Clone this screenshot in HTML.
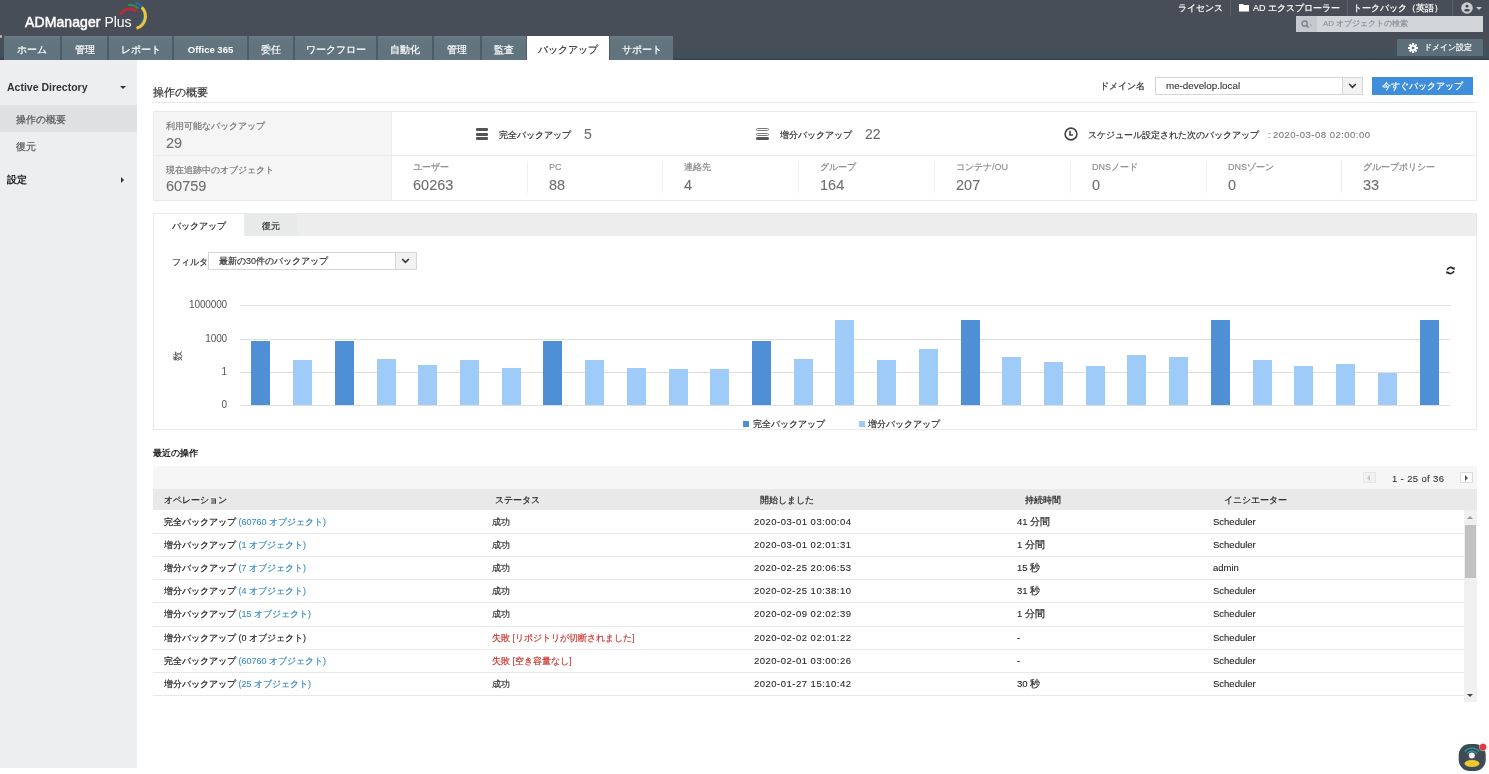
<!DOCTYPE html>
<html lang="ja"><head><meta charset="utf-8"><title>ADManager Plus</title>
<style>
html,body{margin:0;padding:0;width:1489px;height:774px;overflow:hidden;background:#fff;font-family:"Liberation Sans",sans-serif}
.t{will-change:transform}
.b{position:absolute}
.t{position:absolute;white-space:nowrap}
.s{-webkit-text-stroke:0.2px currentColor}
.s0{-webkit-text-stroke:0.1px currentColor}
</style></head><body>
<div class="b" style="left:0px;top:0px;width:1489px;height:60px;background:linear-gradient(to bottom,#474e57 0px,#474e57 46px,#3f5059 54px,#3d4f59 58px,#394249 59px)"></div>
<div class="t" style="left:25px;top:12px;font-size:14px;line-height:20px;color:#fff"><span style="-webkit-text-stroke:0.5px #fff;letter-spacing:0.1px">ADManager</span> <span style="letter-spacing:-0.1px">Plus</span></div>
<svg class="b" style="left:110px;top:0px" width="40" height="35" viewBox="0 0 40 35">
<path d="M10.4 14.6 A11 11 0 0 1 26.5 11.2" stroke="#b82a40" stroke-width="3" fill="none"/>
<path d="M18 5 A14 14 0 0 1 28.5 8.5" stroke="#2f8a50" stroke-width="2.2" fill="none"/>
<path d="M25.5 2.5 A13 13 0 0 1 30 24.5" stroke="#1f6ea5" stroke-width="2.2" fill="none"/>
<path d="M31.8 7.4 A12.5 12.5 0 0 1 26.5 28.2" stroke="#f0c53a" stroke-width="3" fill="none"/>
</svg>
<div class="t s0" style="left:1178px;top:2.0px;font-size:9px;line-height:12px;color:#fff;"><span class="s">ライセンス</span></div>
<div class="b" style="left:1230px;top:0px;width:1px;height:16px;background:#5a6168"></div>
<svg class="b" style="left:1239px;top:3px" width="10" height="9" viewBox="0 0 10 9"><path d="M0 1 H4 L5 2 H10 V8.5 H0 Z" fill="#fff"/></svg>
<div class="t s0" style="left:1253px;top:2.0px;font-size:9px;line-height:12px;color:#fff;">AD <span class="s">エクスプローラー</span></div>
<div class="b" style="left:1347px;top:0px;width:1px;height:16px;background:#5a6168"></div>
<div class="t s0" style="left:1353px;top:2.0px;font-size:9px;line-height:12px;color:#fff;"><span class="s">トークバック（英語）</span></div>
<div class="b" style="left:1452px;top:0px;width:1px;height:16px;background:#5a6168"></div>
<svg class="b" style="left:1461px;top:2px" width="12" height="12" viewBox="0 0 12 12"><circle cx="6" cy="6" r="5.8" fill="#c8cdd3"/><circle cx="6" cy="4.2" r="1.4" fill="#3e454c"/><ellipse cx="6" cy="8.2" rx="2.8" ry="1.3" fill="#3e454c"/></svg>
<div class="b" style="left:1476px;top:7px;border-left:3px solid transparent;border-right:3px solid transparent;border-top:3px solid #c8cdd3"></div>
<div class="b" style="left:1296px;top:16px;width:187px;height:16px;background:#d2d6d9"></div>
<div class="b" style="left:1296px;top:16px;width:21px;height:16px;background:#c4c9cc"></div>
<svg class="b" style="left:1301px;top:20px" width="12" height="9" viewBox="0 0 12 9"><circle cx="3.6" cy="3.6" r="2.6" stroke="#7b8288" stroke-width="1.4" fill="none"/><path d="M5.5 5.5 L7.6 7.8" stroke="#7b8288" stroke-width="1.6"/><path d="M9.5 4.5 L10.5 5.5" stroke="#7b8288" stroke-width="1"/></svg>
<div class="t s0" style="left:1323px;top:18.0px;font-size:8px;line-height:12px;color:#8b9196;">AD <span class="s">オブジェクトの検索</span></div>
<div class="b" style="left:1397px;top:39px;width:86px;height:17px;background:#5c6e7a"></div>
<svg class="b" style="left:1408px;top:43px" width="10" height="10" viewBox="0 0 10 10"><g fill="#fff"><circle cx="5" cy="5" r="3.3"/><rect x="4" y="0" width="2" height="10"/><rect x="0" y="4" width="10" height="2"/><rect x="4" y="0" width="2" height="10" transform="rotate(45 5 5)"/><rect x="4" y="0" width="2" height="10" transform="rotate(-45 5 5)"/></g><circle cx="5" cy="5" r="1.3" fill="#5c6e7a"/></svg>
<div class="t s0" style="left:1424px;top:41.5px;font-size:8px;line-height:12px;color:#fff;"><span class="s">ドメイン設定</span></div>
<div class="b" style="left:4px;top:36px;width:669px;height:24px;background:#4b5d68"></div>
<div class="b" style="left:0px;top:34.5px;width:2px;height:3.0px;background:#b8bec2;border-radius:1px"></div>
<div class="b" style="left:4px;top:36px;width:56px;height:24px;background:linear-gradient(to bottom,#6a7c86 0px,#63767f 3px,#60737e 20px,#63757f 24px)"></div>
<div class="t s" style="left:4px;top:42.5px;width:56px;text-align:center;color:#fff;font-size:9.5px;line-height:14px;">ホーム</div>
<div class="b" style="left:62px;top:36px;width:45px;height:24px;background:linear-gradient(to bottom,#6a7c86 0px,#63767f 3px,#60737e 20px,#63757f 24px)"></div>
<div class="t s" style="left:62px;top:42.5px;width:45px;text-align:center;color:#fff;font-size:9.5px;line-height:14px;">管理</div>
<div class="b" style="left:109px;top:36px;width:63px;height:24px;background:linear-gradient(to bottom,#6a7c86 0px,#63767f 3px,#60737e 20px,#63757f 24px)"></div>
<div class="t s" style="left:109px;top:42.5px;width:63px;text-align:center;color:#fff;font-size:9.5px;line-height:14px;">レポート</div>
<div class="b" style="left:174px;top:36px;width:73px;height:24px;background:linear-gradient(to bottom,#6a7c86 0px,#63767f 3px,#60737e 20px,#63757f 24px)"></div>
<div class="t " style="left:174px;top:42.5px;width:73px;text-align:center;color:#fff;font-size:9.5px;line-height:14px;font-weight:bold;">Office 365</div>
<div class="b" style="left:249px;top:36px;width:44px;height:24px;background:linear-gradient(to bottom,#6a7c86 0px,#63767f 3px,#60737e 20px,#63757f 24px)"></div>
<div class="t s" style="left:249px;top:42.5px;width:44px;text-align:center;color:#fff;font-size:9.5px;line-height:14px;">委任</div>
<div class="b" style="left:295px;top:36px;width:81px;height:24px;background:linear-gradient(to bottom,#6a7c86 0px,#63767f 3px,#60737e 20px,#63757f 24px)"></div>
<div class="t s" style="left:295px;top:42.5px;width:81px;text-align:center;color:#fff;font-size:9.5px;line-height:14px;">ワークフロー</div>
<div class="b" style="left:378px;top:36px;width:54px;height:24px;background:linear-gradient(to bottom,#6a7c86 0px,#63767f 3px,#60737e 20px,#63757f 24px)"></div>
<div class="t s" style="left:378px;top:42.5px;width:54px;text-align:center;color:#fff;font-size:9.5px;line-height:14px;">自動化</div>
<div class="b" style="left:434px;top:36px;width:46px;height:24px;background:linear-gradient(to bottom,#6a7c86 0px,#63767f 3px,#60737e 20px,#63757f 24px)"></div>
<div class="t s" style="left:434px;top:42.5px;width:46px;text-align:center;color:#fff;font-size:9.5px;line-height:14px;">管理</div>
<div class="b" style="left:482px;top:36px;width:44px;height:24px;background:linear-gradient(to bottom,#6a7c86 0px,#63767f 3px,#60737e 20px,#63757f 24px)"></div>
<div class="t s" style="left:482px;top:42.5px;width:44px;text-align:center;color:#fff;font-size:9.5px;line-height:14px;">監査</div>
<div class="b" style="left:527px;top:36px;width:82px;height:24px;background:#ffffff"></div>
<div class="t s" style="left:527px;top:42.5px;width:82px;text-align:center;color:#333;font-size:9.5px;line-height:14px;">バックアップ</div>
<div class="b" style="left:610px;top:36px;width:63px;height:24px;background:linear-gradient(to bottom,#6a7c86 0px,#63767f 3px,#60737e 20px,#63757f 24px)"></div>
<div class="t s" style="left:610px;top:42.5px;width:63px;text-align:center;color:#fff;font-size:9.5px;line-height:14px;">サポート</div>
<div class="b" style="left:0px;top:60px;width:137px;height:708px;background:#edeeef"></div>
<div class="b" style="left:0px;top:105px;width:137px;height:27px;background:#dfe0e1"></div>
<div class="t" style="left:7px;top:80.0px;font-size:10.5px;line-height:14px;color:#333;font-weight:bold;">Active Directory</div>
<div class="b" style="left:120px;top:85.5px;border-left:3px solid transparent;border-right:3px solid transparent;border-top:3px solid #333"></div>
<div class="t s0" style="left:16px;top:112.5px;font-size:9.5px;line-height:14px;color:#555;"><span class="s">操作の概要</span></div>
<div class="t s0" style="left:16px;top:140.0px;font-size:9.5px;line-height:14px;color:#555;"><span class="s">復元</span></div>
<div class="t" style="left:7px;top:173.0px;font-size:10px;line-height:14px;color:#222;font-weight:bold;">設定</div>
<div class="b" style="left:121px;top:177px;border-top:3px solid transparent;border-bottom:3px solid transparent;border-left:3px solid #333"></div>
<div class="t s0" style="left:153px;top:84.5px;font-size:10.5px;line-height:14px;color:#333;"><span class="s">操作の概要</span></div>
<div class="t s0" style="left:1100px;top:79.0px;font-size:9px;line-height:14px;color:#333;"><span class="s">ドメイン名</span></div>
<div class="b" style="left:1155px;top:77px;width:208px;height:18px;background:#fff;border:1px solid #d6d6d6;box-sizing:border-box"></div>
<div class="b" style="left:1342px;top:77px;width:21px;height:18px;background:#f2f2f2;border:1px solid #d6d6d6;box-sizing:border-box"></div>
<div class="t s0" style="left:1166px;top:79.0px;font-size:9.8px;line-height:14px;color:#333;">me-develop.local</div>
<svg class="b" style="left:1348px;top:82px" width="9" height="8" viewBox="0 0 9 8"><path d="M1.2 2 L4.5 5.3 L7.8 2" stroke="#333" stroke-width="1.6" fill="none"/></svg>
<div class="b" style="left:1372px;top:77px;width:101px;height:18px;background:#3f8edc"></div>
<div class="t s" style="left:1372px;top:79px;width:101px;line-height:14px;text-align:center;color:#fff;font-size:9px">今すぐバックアップ</div>
<div class="b" style="left:152px;top:102px;width:1325px;height:1px;background:#e8e8e8"></div>
<div class="b" style="left:153px;top:111px;width:1324px;height:90px;border:1px solid #e9e9e9;box-sizing:border-box;background:#fff"></div>
<div class="b" style="left:154px;top:112px;width:237px;height:88px;background:#f5f5f5"></div>
<div class="b" style="left:391px;top:112px;width:1px;height:88px;background:#ebebeb"></div>
<div class="b" style="left:154px;top:155px;width:1322px;height:1px;background:#ebebeb"></div>
<div class="t s0" style="left:166px;top:119.5px;font-size:9px;line-height:12px;color:#777;"><span class="s">利用可能なバックアップ</span></div>
<div class="t s0" style="left:166px;top:133.5px;font-size:14.5px;line-height:18px;color:#6e6e6e;">29</div>
<div class="t s0" style="left:166px;top:163.5px;font-size:9px;line-height:12px;color:#777;"><span class="s">現在追跡中のオブジェクト</span></div>
<div class="t s0" style="left:166px;top:176.5px;font-size:14.5px;line-height:18px;color:#6e6e6e;">60759</div>
<div class="b" style="left:476px;top:128px;width:12px;height:3px;border-radius:1px;background:#555"></div>
<div class="b" style="left:476px;top:132.8px;width:12px;height:3px;border-radius:1px;background:#555"></div>
<div class="b" style="left:476px;top:137.4px;width:12px;height:3px;border-radius:1px;background:#555"></div>
<div class="t s0" style="left:499px;top:128.5px;font-size:9px;line-height:12px;color:#333;"><span class="s">完全バックアップ</span></div>
<div class="t s0" style="left:584px;top:125.0px;font-size:14px;line-height:18px;color:#6e6e6e;">5</div>
<div class="b" style="left:756px;top:128px;width:13px;height:3px;border-radius:2px;border:1px solid #777;box-sizing:border-box"></div>
<div class="b" style="left:756px;top:132.8px;width:13px;height:3px;border-radius:2px;border:1px solid #777;box-sizing:border-box"></div>
<div class="b" style="left:756px;top:137.4px;width:13px;height:3px;border-radius:2px;background:#555"></div>
<div class="t s0" style="left:780px;top:128.5px;font-size:9px;line-height:12px;color:#333;"><span class="s">増分バックアップ</span></div>
<div class="t s0" style="left:865px;top:125.0px;font-size:14px;line-height:18px;color:#6e6e6e;">22</div>
<svg class="b" style="left:1064px;top:127px" width="14" height="14" viewBox="0 0 14 14"><circle cx="7" cy="7" r="5.9" stroke="#444" stroke-width="1.6" fill="none"/><path d="M6 3.8 V8 H9" stroke="#444" stroke-width="1.6" fill="none"/></svg>
<div class="t s0" style="left:1088px;top:128.5px;font-size:9px;line-height:12px;color:#333;"><span class="s">スケジュール設定された次のバックアップ</span></div>
<div class="t s0" style="left:1268px;top:127.5px;font-size:9px;line-height:14px;color:#777;">: <span style="font-size:9.5px;letter-spacing:0.49px;-webkit-text-stroke:0.1px #777">2020-03-08 02:00:00</span></div>
<div class="t s0" style="left:413px;top:161.0px;font-size:9px;line-height:12px;color:#888;"><span class="s">ユーザー</span></div>
<div class="t s0" style="left:413px;top:175.5px;font-size:14.5px;line-height:18px;color:#6e6e6e;">60263</div>
<div class="b" style="left:527px;top:161px;width:1px;height:32px;background:#efefef"></div>
<div class="t s0" style="left:549px;top:161.0px;font-size:9px;line-height:12px;color:#888;">PC</div>
<div class="t s0" style="left:549px;top:175.5px;font-size:14.5px;line-height:18px;color:#6e6e6e;">88</div>
<div class="b" style="left:662px;top:161px;width:1px;height:32px;background:#efefef"></div>
<div class="t s0" style="left:684px;top:161.0px;font-size:9px;line-height:12px;color:#888;"><span class="s">連絡先</span></div>
<div class="t s0" style="left:684px;top:175.5px;font-size:14.5px;line-height:18px;color:#6e6e6e;">4</div>
<div class="b" style="left:798px;top:161px;width:1px;height:32px;background:#efefef"></div>
<div class="t s0" style="left:820px;top:161.0px;font-size:9px;line-height:12px;color:#888;"><span class="s">グループ</span></div>
<div class="t s0" style="left:820px;top:175.5px;font-size:14.5px;line-height:18px;color:#6e6e6e;">164</div>
<div class="b" style="left:934px;top:161px;width:1px;height:32px;background:#efefef"></div>
<div class="t s0" style="left:956px;top:161.0px;font-size:9px;line-height:12px;color:#888;"><span class="s">コンテナ</span>/OU</div>
<div class="t s0" style="left:956px;top:175.5px;font-size:14.5px;line-height:18px;color:#6e6e6e;">207</div>
<div class="b" style="left:1070px;top:161px;width:1px;height:32px;background:#efefef"></div>
<div class="t s0" style="left:1092px;top:161.0px;font-size:9px;line-height:12px;color:#888;">DNS<span class="s">ノード</span></div>
<div class="t s0" style="left:1092px;top:175.5px;font-size:14.5px;line-height:18px;color:#6e6e6e;">0</div>
<div class="b" style="left:1206px;top:161px;width:1px;height:32px;background:#efefef"></div>
<div class="t s0" style="left:1228px;top:161.0px;font-size:9px;line-height:12px;color:#888;">DNS<span class="s">ゾーン</span></div>
<div class="t s0" style="left:1228px;top:175.5px;font-size:14.5px;line-height:18px;color:#6e6e6e;">0</div>
<div class="b" style="left:1341px;top:161px;width:1px;height:32px;background:#efefef"></div>
<div class="t s0" style="left:1363px;top:161.0px;font-size:9px;line-height:12px;color:#888;"><span class="s">グループポリシー</span></div>
<div class="t s0" style="left:1363px;top:175.5px;font-size:14.5px;line-height:18px;color:#6e6e6e;">33</div>
<div class="b" style="left:153px;top:213px;width:1324px;height:217px;border:1px solid #e9e9e9;box-sizing:border-box;background:#fff"></div>
<div class="b" style="left:154px;top:214px;width:1322px;height:22px;background:#ededed"></div>
<div class="b" style="left:245px;top:214px;width:52px;height:22px;background:#e8e9e9"></div>
<div class="b" style="left:154px;top:214px;width:90px;height:23px;background:#fff"></div>
<div class="t s0" style="left:172px;top:220.0px;font-size:9px;line-height:12px;color:#333;"><span class="s">バックアップ</span></div>
<div class="t s0" style="left:262px;top:220.0px;font-size:9px;line-height:12px;color:#333;"><span class="s">復元</span></div>
<div class="t s0" style="left:172px;top:255.5px;font-size:9px;line-height:12px;color:#333;"><span class="s">フィルタ</span></div>
<div class="b" style="left:208px;top:252px;width:209px;height:18px;background:#fff;border:1px solid #d6d6d6;box-sizing:border-box"></div>
<div class="b" style="left:395px;top:252px;width:22px;height:18px;background:#f2f2f2;border:1px solid #d6d6d6;box-sizing:border-box"></div>
<div class="t s0" style="left:219px;top:255.0px;font-size:9px;line-height:12px;color:#333;"><span class="s">最新の</span>30<span class="s">件のバックアップ</span></div>
<svg class="b" style="left:401px;top:257px" width="9" height="8" viewBox="0 0 9 8"><path d="M1.2 2 L4.5 5.3 L7.8 2" stroke="#333" stroke-width="1.6" fill="none"/></svg>
<svg class="b" style="left:1445px;top:265px" width="11" height="11" viewBox="0 0 11 11"><path d="M2.2 5 A3.4 3.4 0 0 1 8.4 4" stroke="#222" stroke-width="1.5" fill="none"/><path d="M8.8 6 A3.4 3.4 0 0 1 2.6 7" stroke="#222" stroke-width="1.5" fill="none"/><path d="M6.8 3.6 L9.6 5 L9.6 2" fill="#222"/><path d="M4.2 7.4 L1.4 6 L1.4 9" fill="#222"/></svg>
<div class="b" style="left:240px;top:305px;width:1210px;height:1px;background:#dedede"></div>
<div class="t" style="left:150px;width:77px;text-align:right;top:298px;font-size:10px;line-height:14px;color:#555;letter-spacing:-0.15px">1000000</div>
<div class="b" style="left:240px;top:339px;width:1210px;height:1px;background:#dedede"></div>
<div class="t" style="left:150px;width:77px;text-align:right;top:332px;font-size:10px;line-height:14px;color:#555;letter-spacing:-0.15px">1000</div>
<div class="b" style="left:240px;top:372px;width:1210px;height:1px;background:#dedede"></div>
<div class="t" style="left:150px;width:77px;text-align:right;top:365px;font-size:10px;line-height:14px;color:#555;letter-spacing:-0.15px">1</div>
<div class="b" style="left:240px;top:405px;width:1210px;height:1px;background:#dedede"></div>
<div class="t" style="left:150px;width:77px;text-align:right;top:398px;font-size:10px;line-height:14px;color:#555;letter-spacing:-0.15px">0</div>
<div class="t" style="left:173px;top:349.5px;font-size:9.5px;line-height:12px;color:#444;transform:rotate(-90deg)">数</div>
<div class="b" style="left:251.3px;top:341px;width:19px;height:64px;background:#4f8fd5"></div>
<div class="b" style="left:293.0px;top:360px;width:19px;height:45px;background:#9fcbf9"></div>
<div class="b" style="left:334.7px;top:341px;width:19px;height:64px;background:#4f8fd5"></div>
<div class="b" style="left:376.5px;top:359px;width:19px;height:46px;background:#9fcbf9"></div>
<div class="b" style="left:418.2px;top:365px;width:19px;height:40px;background:#9fcbf9"></div>
<div class="b" style="left:459.9px;top:360px;width:19px;height:45px;background:#9fcbf9"></div>
<div class="b" style="left:501.6px;top:368px;width:19px;height:37px;background:#9fcbf9"></div>
<div class="b" style="left:543.3px;top:341px;width:19px;height:64px;background:#4f8fd5"></div>
<div class="b" style="left:585.1px;top:360px;width:19px;height:45px;background:#9fcbf9"></div>
<div class="b" style="left:626.8px;top:368px;width:19px;height:37px;background:#9fcbf9"></div>
<div class="b" style="left:668.5px;top:369px;width:19px;height:36px;background:#9fcbf9"></div>
<div class="b" style="left:710.2px;top:369px;width:19px;height:36px;background:#9fcbf9"></div>
<div class="b" style="left:751.9px;top:341px;width:19px;height:64px;background:#4f8fd5"></div>
<div class="b" style="left:793.7px;top:359px;width:19px;height:46px;background:#9fcbf9"></div>
<div class="b" style="left:835.4px;top:320px;width:19px;height:85px;background:#9fcbf9"></div>
<div class="b" style="left:877.1px;top:360px;width:19px;height:45px;background:#9fcbf9"></div>
<div class="b" style="left:918.8px;top:349px;width:19px;height:56px;background:#9fcbf9"></div>
<div class="b" style="left:960.5px;top:320px;width:19px;height:85px;background:#4f8fd5"></div>
<div class="b" style="left:1002.3px;top:357px;width:19px;height:48px;background:#9fcbf9"></div>
<div class="b" style="left:1044.0px;top:362px;width:19px;height:43px;background:#9fcbf9"></div>
<div class="b" style="left:1085.7px;top:366px;width:19px;height:39px;background:#9fcbf9"></div>
<div class="b" style="left:1127.4px;top:355px;width:19px;height:50px;background:#9fcbf9"></div>
<div class="b" style="left:1169.1px;top:357px;width:19px;height:48px;background:#9fcbf9"></div>
<div class="b" style="left:1210.9px;top:320px;width:19px;height:85px;background:#4f8fd5"></div>
<div class="b" style="left:1252.6px;top:360px;width:19px;height:45px;background:#9fcbf9"></div>
<div class="b" style="left:1294.3px;top:366px;width:19px;height:39px;background:#9fcbf9"></div>
<div class="b" style="left:1336.0px;top:364px;width:19px;height:41px;background:#9fcbf9"></div>
<div class="b" style="left:1377.7px;top:373px;width:19px;height:32px;background:#9fcbf9"></div>
<div class="b" style="left:1419.5px;top:320px;width:19px;height:85px;background:#4f8fd5"></div>
<div class="b" style="left:743px;top:421px;width:6px;height:6px;background:#4f8fd5"></div>
<div class="t s0" style="left:753px;top:418.0px;font-size:9px;line-height:12px;color:#333;"><span class="s">完全バックアップ</span></div>
<div class="b" style="left:859px;top:421px;width:6px;height:6px;background:#9fcbf9"></div>
<div class="t s0" style="left:868px;top:418.0px;font-size:9px;line-height:12px;color:#333;"><span class="s">増分バックアップ</span></div>
<div class="t" style="left:153px;top:447.0px;font-size:9px;line-height:12px;color:#222;font-weight:bold;">最近の操作</div>
<div class="b" style="left:153px;top:466px;width:1324px;height:23px;background:#f6f6f6"></div>
<div class="b" style="left:1363px;top:472px;width:13px;height:11px;background:#f1f1f1;border:1px solid #e6e6e6;box-sizing:border-box"></div>
<div class="b" style="left:1367px;top:474.5px;border-top:3px solid transparent;border-bottom:3px solid transparent;border-right:3px solid #c4c4c4"></div>
<div class="t s0" style="left:1392px;top:471.5px;font-size:9.5px;line-height:14px;color:#333;letter-spacing:0.35px">1 - 25 of 36</div>
<div class="b" style="left:1460px;top:472px;width:13px;height:11px;background:#fff;border:1px solid #dcdcdc;box-sizing:border-box"></div>
<div class="b" style="left:1465px;top:474.5px;border-top:3px solid transparent;border-bottom:3px solid transparent;border-left:3px solid #555"></div>
<div class="b" style="left:153px;top:489px;width:1324px;height:21px;background:#e9e9e9"></div>
<div class="t s0" style="left:164px;top:494.0px;font-size:9px;line-height:12px;color:#222;"><span class="s">オペレーション</span></div>
<div class="t s0" style="left:495px;top:494.0px;font-size:9px;line-height:12px;color:#222;"><span class="s">ステータス</span></div>
<div class="t s0" style="left:760px;top:494.0px;font-size:9px;line-height:12px;color:#222;"><span class="s">開始しました</span></div>
<div class="t s0" style="left:1025px;top:494.0px;font-size:9px;line-height:12px;color:#222;"><span class="s">持続時間</span></div>
<div class="t s0" style="left:1224px;top:494.0px;font-size:9px;line-height:12px;color:#222;"><span class="s">イニシエーター</span></div>
<div class="b" style="left:153px;top:533px;width:1311px;height:1px;background:#e8e8e8"></div>
<div class="t s0" style="left:164px;top:515.7px;font-size:9px;line-height:12px;color:#222;"><span class="s">完全バックアップ</span> <span style="color:#3b8cc0">(60760 <span class="s">オブジェクト</span>)</span></div>
<div class="t s0" style="left:492px;top:515.7px;font-size:9px;line-height:12px;color:#333;"><span class="s">成功</span></div>
<div class="t s0" style="left:754px;top:515.7px;font-size:9.5px;line-height:12px;color:#222;letter-spacing:0.49px;-webkit-text-stroke:0.1px #333">2020-03-01 03:00:04</div>
<div class="t s0" style="left:1017px;top:515.7px;font-size:9.5px;line-height:12px;color:#222;">41 <span class="s">分間</span></div>
<div class="t s0" style="left:1213px;top:515.7px;font-size:9.5px;line-height:12px;color:#222;">Scheduler</div>
<div class="b" style="left:153px;top:556px;width:1311px;height:1px;background:#e8e8e8"></div>
<div class="t s0" style="left:164px;top:538.9px;font-size:9px;line-height:12px;color:#222;"><span class="s">増分バックアップ</span> <span style="color:#3b8cc0">(1 <span class="s">オブジェクト</span>)</span></div>
<div class="t s0" style="left:492px;top:538.9px;font-size:9px;line-height:12px;color:#333;"><span class="s">成功</span></div>
<div class="t s0" style="left:754px;top:538.9px;font-size:9.5px;line-height:12px;color:#222;letter-spacing:0.49px;-webkit-text-stroke:0.1px #333">2020-03-01 02:01:31</div>
<div class="t s0" style="left:1017px;top:538.9px;font-size:9.5px;line-height:12px;color:#222;">1 <span class="s">分間</span></div>
<div class="t s0" style="left:1213px;top:538.9px;font-size:9.5px;line-height:12px;color:#222;">Scheduler</div>
<div class="b" style="left:153px;top:579px;width:1311px;height:1px;background:#e8e8e8"></div>
<div class="t s0" style="left:164px;top:562.0px;font-size:9px;line-height:12px;color:#222;"><span class="s">増分バックアップ</span> <span style="color:#3b8cc0">(7 <span class="s">オブジェクト</span>)</span></div>
<div class="t s0" style="left:492px;top:562.0px;font-size:9px;line-height:12px;color:#333;"><span class="s">成功</span></div>
<div class="t s0" style="left:754px;top:562.0px;font-size:9.5px;line-height:12px;color:#222;letter-spacing:0.49px;-webkit-text-stroke:0.1px #333">2020-02-25 20:06:53</div>
<div class="t s0" style="left:1017px;top:562.0px;font-size:9.5px;line-height:12px;color:#222;">15 <span class="s">秒</span></div>
<div class="t s0" style="left:1213px;top:562.0px;font-size:9.5px;line-height:12px;color:#222;">admin</div>
<div class="b" style="left:153px;top:602px;width:1311px;height:1px;background:#e8e8e8"></div>
<div class="t s0" style="left:164px;top:585.2px;font-size:9px;line-height:12px;color:#222;"><span class="s">増分バックアップ</span> <span style="color:#3b8cc0">(4 <span class="s">オブジェクト</span>)</span></div>
<div class="t s0" style="left:492px;top:585.2px;font-size:9px;line-height:12px;color:#333;"><span class="s">成功</span></div>
<div class="t s0" style="left:754px;top:585.2px;font-size:9.5px;line-height:12px;color:#222;letter-spacing:0.49px;-webkit-text-stroke:0.1px #333">2020-02-25 10:38:10</div>
<div class="t s0" style="left:1017px;top:585.2px;font-size:9.5px;line-height:12px;color:#222;">31 <span class="s">秒</span></div>
<div class="t s0" style="left:1213px;top:585.2px;font-size:9.5px;line-height:12px;color:#222;">Scheduler</div>
<div class="b" style="left:153px;top:626px;width:1311px;height:1px;background:#e8e8e8"></div>
<div class="t s0" style="left:164px;top:608.3px;font-size:9px;line-height:12px;color:#222;"><span class="s">増分バックアップ</span> <span style="color:#3b8cc0">(15 <span class="s">オブジェクト</span>)</span></div>
<div class="t s0" style="left:492px;top:608.3px;font-size:9px;line-height:12px;color:#333;"><span class="s">成功</span></div>
<div class="t s0" style="left:754px;top:608.3px;font-size:9.5px;line-height:12px;color:#222;letter-spacing:0.49px;-webkit-text-stroke:0.1px #333">2020-02-09 02:02:39</div>
<div class="t s0" style="left:1017px;top:608.3px;font-size:9.5px;line-height:12px;color:#222;">1 <span class="s">分間</span></div>
<div class="t s0" style="left:1213px;top:608.3px;font-size:9.5px;line-height:12px;color:#222;">Scheduler</div>
<div class="b" style="left:153px;top:649px;width:1311px;height:1px;background:#e8e8e8"></div>
<div class="t s0" style="left:164px;top:631.5px;font-size:9px;line-height:12px;color:#222;"><span class="s">増分バックアップ</span> <span style="color:#222">(0 <span class="s">オブジェクト</span>)</span></div>
<div class="t s0" style="left:492px;top:631.5px;font-size:9px;line-height:12px;color:#cc3b32;"><span class="s">失敗</span> [<span class="s">リポジトリが切断されました</span>]</div>
<div class="t s0" style="left:754px;top:631.5px;font-size:9.5px;line-height:12px;color:#222;letter-spacing:0.49px;-webkit-text-stroke:0.1px #333">2020-02-02 02:01:22</div>
<div class="t s0" style="left:1017px;top:631.5px;font-size:9.5px;line-height:12px;color:#222;">-</div>
<div class="t s0" style="left:1213px;top:631.5px;font-size:9.5px;line-height:12px;color:#222;">Scheduler</div>
<div class="b" style="left:153px;top:672px;width:1311px;height:1px;background:#e8e8e8"></div>
<div class="t s0" style="left:164px;top:654.6px;font-size:9px;line-height:12px;color:#222;"><span class="s">完全バックアップ</span> <span style="color:#3b8cc0">(60760 <span class="s">オブジェクト</span>)</span></div>
<div class="t s0" style="left:492px;top:654.6px;font-size:9px;line-height:12px;color:#cc3b32;"><span class="s">失敗</span> [<span class="s">空き容量なし</span>]</div>
<div class="t s0" style="left:754px;top:654.6px;font-size:9.5px;line-height:12px;color:#222;letter-spacing:0.49px;-webkit-text-stroke:0.1px #333">2020-02-01 03:00:26</div>
<div class="t s0" style="left:1017px;top:654.6px;font-size:9.5px;line-height:12px;color:#222;">-</div>
<div class="t s0" style="left:1213px;top:654.6px;font-size:9.5px;line-height:12px;color:#222;">Scheduler</div>
<div class="b" style="left:153px;top:695px;width:1311px;height:1px;background:#e8e8e8"></div>
<div class="t s0" style="left:164px;top:677.8px;font-size:9px;line-height:12px;color:#222;"><span class="s">増分バックアップ</span> <span style="color:#3b8cc0">(25 <span class="s">オブジェクト</span>)</span></div>
<div class="t s0" style="left:492px;top:677.8px;font-size:9px;line-height:12px;color:#333;"><span class="s">成功</span></div>
<div class="t s0" style="left:754px;top:677.8px;font-size:9.5px;line-height:12px;color:#222;letter-spacing:0.49px;-webkit-text-stroke:0.1px #333">2020-01-27 15:10:42</div>
<div class="t s0" style="left:1017px;top:677.8px;font-size:9.5px;line-height:12px;color:#222;">30 <span class="s">秒</span></div>
<div class="t s0" style="left:1213px;top:677.8px;font-size:9.5px;line-height:12px;color:#222;">Scheduler</div>
<div class="b" style="left:1464px;top:510px;width:13px;height:192px;background:#f0f0f0"></div>
<div class="b" style="left:1465px;top:525px;width:11px;height:53px;background:#c1c1c1"></div>
<div class="b" style="left:1467px;top:516px;border-left:3px solid transparent;border-right:3px solid transparent;border-bottom:3px solid #999"></div>
<div class="b" style="left:1467px;top:694px;border-left:3px solid transparent;border-right:3px solid transparent;border-top:3px solid #444"></div>
<svg class="b" style="left:1456px;top:740px" width="33" height="34" viewBox="0 0 33 34">
<rect x="2.7" y="4" width="27" height="27" rx="11" ry="11" fill="#3f4b53"/>
<path d="M9 11.5 A9 9 0 0 1 23 11.5" stroke="#2a9aa8" stroke-width="1.4" fill="none"/>
<path d="M11 13.5 A6.5 6.5 0 0 1 21 13.5" stroke="#2a9aa8" stroke-width="1.2" fill="none"/>
<circle cx="15.8" cy="15.5" r="3" fill="#f4f4f4"/>
<ellipse cx="16" cy="23.5" rx="7.5" ry="3.5" fill="#f2c531"/>
<circle cx="27" cy="7" r="4.2" fill="#f6c9c9" opacity="0.6"/>
<circle cx="27" cy="7" r="3.2" fill="#e0383e"/>
</svg>
</body></html>
